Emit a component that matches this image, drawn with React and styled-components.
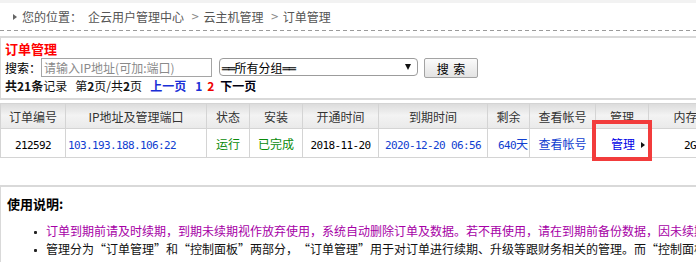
import React from 'react';
import styled, { createGlobalStyle } from 'styled-components';

const GlobalStyle = createGlobalStyle`
  html, body { margin: 0; padding: 0; overflow: hidden; background: #fff; }
  body {
    font-family: "Noto Sans CJK SC", "Noto Sans", sans-serif;
    font-size: 12px;
    color: #000;
  }
`;

const Page = styled.div`
  width: 1100px;
  border-top: 3px solid #f2f2f2;
  white-space: nowrap;
`;

const Breadcrumb = styled.div`
  height: 27px;
  display: flex;
  align-items: center;
  padding-left: 13px;
  color: #555;
  font-size: 12px;
`;

const Arrow = styled.span`
  width: 0;
  height: 0;
  border-left: 4px solid #666;
  border-top: 3px solid transparent;
  border-bottom: 3px solid transparent;
  margin-right: 5px;
`;

const Crumb = styled.span`
  margin-left: ${p => p.$ml || 0}px;
`;

const Sep = styled.span`
  color: #888;
  margin: 0 4px 0 7px;
  font-family: "DejaVu Sans", sans-serif;
  font-size: 10px;
`;

const Dashed = styled.div`
  height: 1px;
  width: 696px;
  background: repeating-linear-gradient(to right, #9a9a9a 0 4px, transparent 4px 7px);
`;

const Box = styled.div`
  margin-top: ${p => p.$mt}px;
  border: 1px solid #d9d9d9;
  border-top-width: 2px;
  border-bottom-width: ${p => p.$bb ?? 2}px;
  padding: ${p => p.$pad};
`;

const Title = styled.div`
  font-size: 13px;
  font-weight: bold;
  color: #f00;
  line-height: 16px;
`;

const SearchRow = styled.div`
  display: flex;
  align-items: flex-start;
  height: 21px;
`;

const Label = styled.span`
  line-height: 21px;
  width: 36px;
`;

const Input = styled.input`
  box-sizing: border-box;
  margin: 1px 0 0 0;
  width: 171px;
  height: 19px;
  border: 1px solid #a5a5a5;
  padding: 0 2px;
  font-family: "Noto Sans CJK SC", sans-serif;
  font-size: 12px;
  outline: none;
  &::placeholder { color: #8a8a8a; }
`;

const FakeSelect = styled.div`
  box-sizing: border-box;
  margin: 1px 0 0 7px;
  width: 199px;
  height: 18px;
  border: 1px solid #9c9c9c;
  border-radius: 4px;
  display: flex;
  align-items: center;
  justify-content: space-between;
  padding: 0 6px 0 2px;
  font-size: 12px;
`;

const DoubleBar = styled.span`
  font-family: "DejaVu Sans Mono", monospace;
  font-size: 12px;
  letter-spacing: -1px;
`;

const Caret = styled.span`
  width: 0;
  height: 0;
  border-top: 6px solid #111;
  border-left: 3px solid transparent;
  border-right: 3px solid transparent;
`;

const Button = styled.button`
  box-sizing: border-box;
  margin: 1px 0 0 6px;
  width: 54px;
  height: 20px;
  border: 1px solid #a3a3a3;
  border-radius: 2px;
  background: linear-gradient(#fbfbfb, #e3e3e3);
  font-family: "Noto Sans CJK SC", sans-serif;
  font-size: 12px;
  padding: 0;
  color: #000;
  word-spacing: 2px;
`;

const Pager = styled.div`
  line-height: 15px;
  display: flex;
  color: #111;
`;

const PItem = styled.span`
  margin-left: ${p => p.$ml || 0}px;
  font-weight: ${p => (p.$bold ? 'bold' : 'normal')};
  color: ${p => p.$color || 'inherit'};
`;

const Table = styled.table`
  margin-top: 3px;
  border-collapse: collapse;
  table-layout: fixed;
  width: 1000px;
`;

const HeadRow = styled.tr`
  height: 25px;
  background: linear-gradient(to bottom, #dcdcdc 0%, #f3f3f3 45%, #e9e9e9 100%);
`;

const Th = styled.th`
  border: 1px solid #d4d4d4;
  font-weight: normal;
  font-size: 12px;
  color: #333;
  padding: 0;
  text-align: center;
  overflow: hidden;
`;

const BodyRow = styled.tr`
  height: 29px;
`;

const Td = styled.td`
  border: 1px solid #d4d4d4;
  padding: 0 ${p => p.$pr ?? 0}px 0 ${p => p.$pl ?? 0}px;
  text-align: ${p => p.$align || 'center'};
  color: ${p => p.$color || '#000'};
  font-size: 12px;
  position: relative;
  overflow: visible;
`;

const Mono = styled.span`
  font-family: "DejaVu Sans Mono", monospace;
  font-size: 11px;
  letter-spacing: -0.62px;
`;

const Link = styled.span`
  color: ${p => p.$color || '#1040d0'};
`;

const PlayTri = styled.span`
  display: inline-block;
  width: 0;
  height: 0;
  margin-left: 6px;
  border-left: 4px solid #111;
  border-top: 3.5px solid transparent;
  border-bottom: 3.5px solid transparent;
  vertical-align: middle;
`;

const RedMark = styled.div`
  position: absolute;
  box-sizing: border-box;
  left: -4px;
  top: -9px;
  width: 60px;
  height: 41px;
  border: 4px solid #f23c3c;
  pointer-events: none;
`;

const NoteTitle = styled.div`
  font-size: 13px;
  font-weight: bold;
  line-height: 16px;
  color: #000;
`;

const List = styled.ul`
  list-style: none;
  margin: 10px 0 0 0;
  padding: 0 0 0 27px;
`;

const Item = styled.li`
  line-height: 18px;
  color: ${p => p.$color || '#111'};
  &::before {
    content: "";
    display: inline-block;
    width: 3px;
    height: 3px;
    background: #222;
    border-radius: 1px;
    margin-right: 9px;
    vertical-align: middle;
  }
`;

const Q = styled.span`
  display: inline-block;
  width: 12px;
  text-align: ${p => (p.$open ? 'right' : 'left')};
`;

const Open = () => <Q $open>“</Q>;
const Close = () => <Q>”</Q>;

const cols = [65, 141, 43, 53, 76, 109, 42, 66, 53, 74, 70, 70, 70, 78];

export default function App() {
  return (
    <>
      <GlobalStyle />
      <Page>
        <Breadcrumb>
          <Arrow />
          <span>您的位置：</span>
          <Crumb $ml={6}>企云用户管理中心</Crumb>
          <Sep>&gt;</Sep>
          <Crumb>云主机管理</Crumb>
          <Sep>&gt;</Sep>
          <Crumb>订单管理</Crumb>
        </Breadcrumb>
        <Dashed />
        <Box $mt={5} $pad="3px 4px 5px">
          <Title>订单管理</Title>
          <SearchRow>
            <Label>搜索：</Label>
            <Input placeholder="请输入IP地址(可加:端口)" />
            <FakeSelect>
              <span><DoubleBar>══</DoubleBar>所有分组<DoubleBar>══</DoubleBar></span>
              <Caret />
            </FakeSelect>
            <Button>搜 索</Button>
          </SearchRow>
          <Pager>
            <PItem $bold>共21条</PItem>
            <PItem>记录</PItem>
            <PItem $ml={8}>第<b>2</b>页/共<b>2</b>页</PItem>
            <PItem $ml={8} $bold $color="#1a2fd6">上一页</PItem>
            <PItem $ml={9} $bold $color="#1a2fd6">1</PItem>
            <PItem $ml={5} $bold $color="#e00">2</PItem>
            <PItem $ml={6} $bold $color="#001">下一页</PItem>
          </Pager>
        </Box>
        <Table>
          <colgroup>
            {cols.map((w, i) => (
              <col key={i} style={{ width: w }} />
            ))}
          </colgroup>
          <thead>
            <HeadRow>
              <Th>订单编号</Th>
              <Th>IP地址及管理端口</Th>
              <Th>状态</Th>
              <Th>安装</Th>
              <Th>开通时间</Th>
              <Th>到期时间</Th>
              <Th>剩余</Th>
              <Th>查看帐号</Th>
              <Th>管理</Th>
              <Th>内存</Th>
              <Th>硬盘</Th>
              <Th>带宽</Th>
              <Th>线路</Th>
              <Th>备注</Th>
            </HeadRow>
          </thead>
          <tbody>
            <BodyRow>
              <Td><Mono>212592</Mono></Td>
              <Td $align="left" $pl={2} $color="#1040d0"><Mono>103.193.188.106:22</Mono></Td>
              <Td $color="#0a8a0a">运行</Td>
              <Td $color="#0a8a0a">已完成</Td>
              <Td><Mono>2018-11-20</Mono></Td>
              <Td $color="#1040d0"><Mono>2020-12-20 06:56</Mono></Td>
              <Td $align="right" $pr={1} $color="#1040d0"><Mono>640</Mono>天</Td>
              <Td><Link>查看帐号</Link></Td>
              <Td $align="right" $pr={3}>
                <Link $color="#0000e6">管理</Link>
                <PlayTri />
                <RedMark />
              </Td>
              <Td $align="left" $pl={35}><Mono>2GB</Mono></Td>
              <Td><Mono>50G</Mono></Td>
              <Td><Mono>5M</Mono></Td>
              <Td>BGP</Td>
              <Td></Td>
            </BodyRow>
          </tbody>
        </Table>
        <Box $mt={27} $pad="9px 6px 10px" $bb={0}>
          <NoteTitle>使用说明:</NoteTitle>
          <List>
            <Item $color="#a600a6">订单到期前请及时续期，到期未续期视作放弃使用，系统自动删除订单及数据。若不再使用，请在到期前备份数据，因未续期导致数据丢失的，本公司不承担任何责任。</Item>
            <Item>管理分为<Open />订单管理<Close />和<Open />控制面板<Close />两部分，<Open />订单管理<Close />用于对订单进行续期、升级等跟财务相关的管理。而<Open />控制面板<Close />用于对云主机进行开关机、重装系统等操作。</Item>
          </List>
        </Box>
      </Page>
    </>
  );
}
